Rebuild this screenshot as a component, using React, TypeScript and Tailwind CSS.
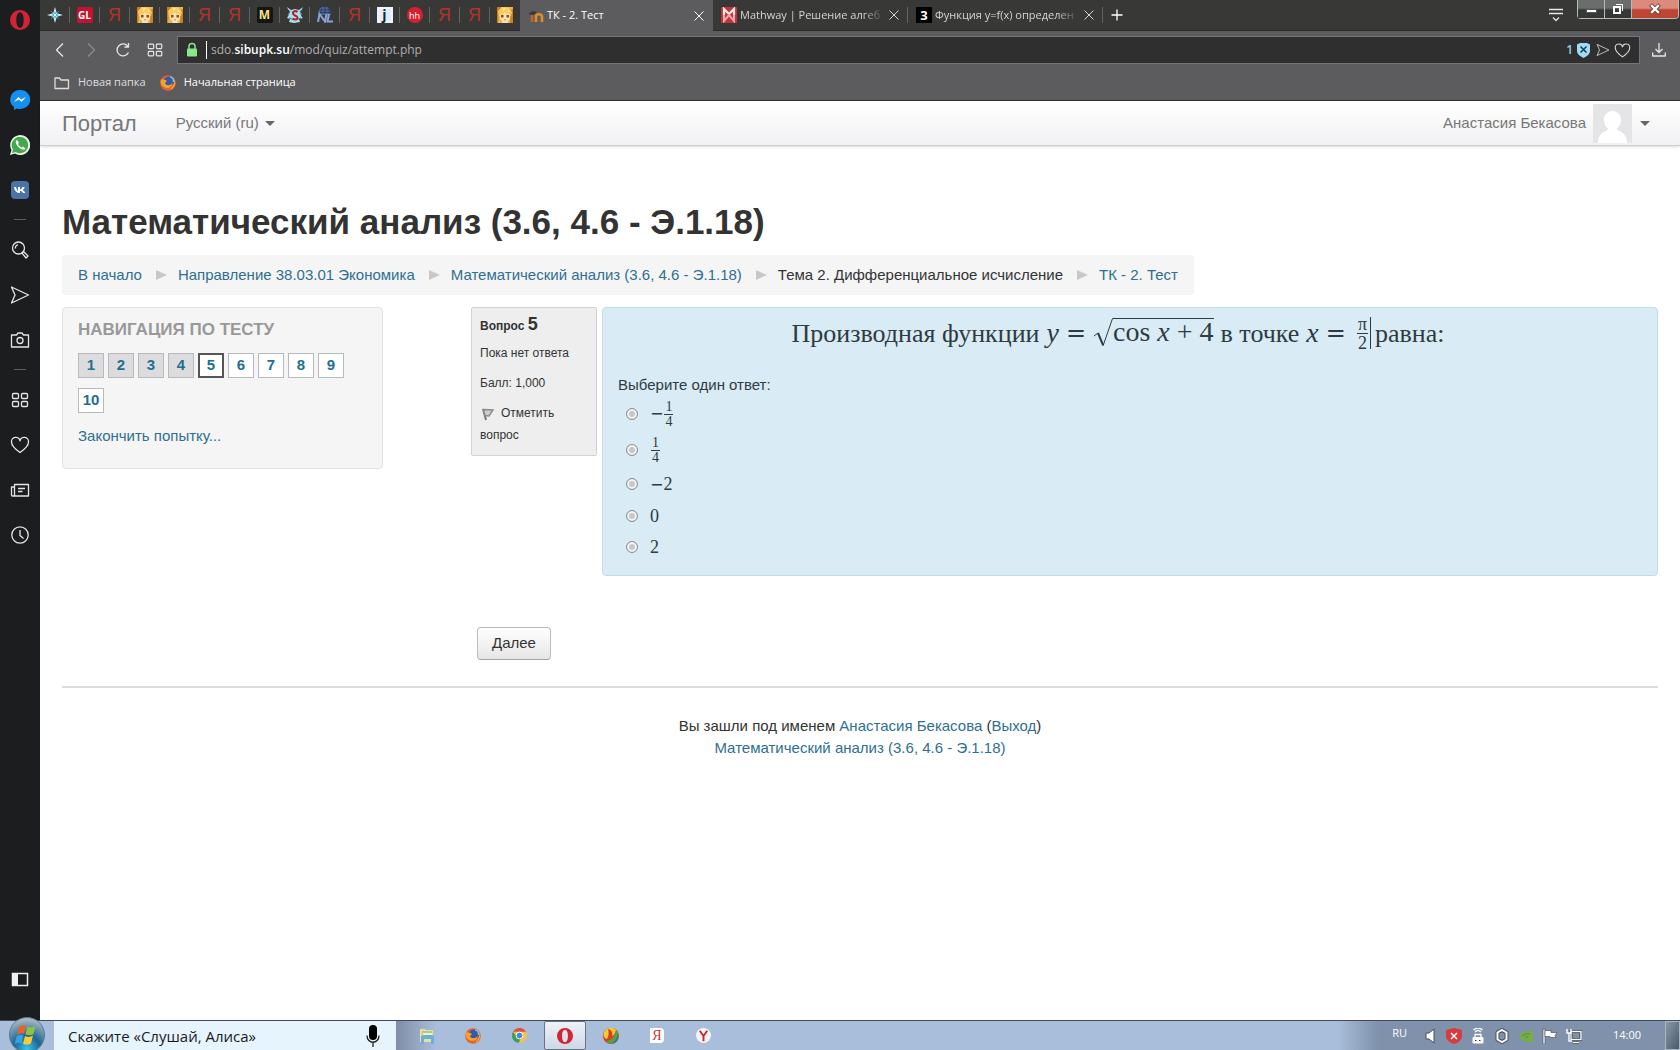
import type { ReactNode } from "react";

const link = "text-[#2f6f8f] hover:underline";

function GirlIcon() {
  return (
    <svg className="size-4" viewBox="0 0 16 16">
      <rect width="16" height="16" fill="#f0b045" />
      <path d="M0 0h4L2 6l-1 10H0zM14 3l2-1v14h-3z" fill="#c87f24" />
      <path d="M3 6 8 3l5 3v6l-3 3H6l-3-3z" fill="#fde0b4" />
      <path d="M1 4 5 0h6l4 5-1 4-3-3-1 2-2-3-3 3-1-1-2 4z" fill="#fbc95c" />
      <path d="m6 1 3 0-3 4zM10 1l3 4-2 0z" fill="#ffe9a0" />
      <path d="M4 8h2.500v2.500H4zM9.500 8H12v2.500H9.500z" fill="#8a4f1c" />
      <path d="M7 12.500h2v.8H7z" fill="#d0603c" />
      <path d="M5 15h6v1H5z" fill="#e8e0d0" />
    </svg>
  );
}

function YandexIcon() {
  return <span className="font-['Liberation_Sans',Arial,sans-serif] text-lg leading-4 text-[#b3332b]">Я</span>;
}

function StarIcon() {
  return (
    <svg className="size-4" viewBox="0 0 16 16">
      <path d="M8 0 9.800 6.200 16 8 9.800 9.800 8 16 6.200 9.800 0 8l6.200-1.800z" fill="#c9f1fc" />
      <path d="M4 4l2 2M12 4l-2 2M4 12l2-2M12 12l-2-2" stroke="#3e8ba8" />
      <path d="m8 4 1 3 3 1-3 1-1 3-1-3-3-1 3-1z" fill="#2a9cc4" />
      <circle cx="8" cy="8" r="1.200" fill="#e9fbff" />
    </svg>
  );
}

function SnakeIcon() {
  return (
    <svg className="size-4" viewBox="0 0 16 16">
      <path d="M0 0c1 3 2 3 3 4-1 2-1 4-3 7l3 1-1 3 5 1 6-1-1-3 4-1c-3-3-2-5-3-7 2-1 2-2 3-4l-4 3-4-1-4 1z" fill="#a8dfec" />
      <path d="M3 4 1 8M13 4l2 4M2 11l3 1M14 11l-3 1" stroke="#3a7f95" />
      <path d="M10.500 5C9 3.500 5.500 4 6 6.500s4.500 2 4.500 4.200-3.500 2.300-5 .8" fill="none" stroke="#b51f31" strokeWidth="2" />
    </svg>
  );
}

function GlobeNlIcon() {
  return (
    <svg className="size-4" viewBox="0 0 16 16">
      <path d="M2 8a6 6 0 0 1 11-5l1 5z" fill="#4f679c" />
      <path d="M2 5.500h12M8 0v8M3 3h10M5 1.500c-1.500 2-1.500 4-1 6M11 1.500c1.500 2 1.500 4 1 6" fill="none" stroke="#26304c" strokeWidth=".7" />
      <path d="m1 15 1.500-8L8 14.500 9.500 7M12 7l-1.500 7.500H16" fill="none" stroke="#8ba2dc" strokeWidth="2" />
    </svg>
  );
}

function MoodleIcon() {
  return (
    <svg className="size-4" viewBox="0 0 16 16">
      <path d="M4 14V7" stroke="#bb6a26" strokeWidth="2.500" />
      <path d="M8 14V8.500c0-3 6-3 6 0V14" fill="none" stroke="#e38a2e" strokeWidth="2.600" />
      <path d="m0 6 5-3 4 1-4 3z" fill="#3c3632" />
    </svg>
  );
}

function MathwayIcon() {
  return (
    <svg className="size-4" viewBox="0 0 16 16">
      <rect width="16" height="16" rx="1" fill="#c1353a" />
      <path d="M3 8V2l5 5 5-5v6" fill="none" stroke="#f8e6e6" strokeWidth="2.200" />
      <path d="M3 8v6l5-6 5 6V8" fill="none" stroke="#eba9aa" strokeWidth="2" />
    </svg>
  );
}

function Badge({ className, children }: { className: string; children: ReactNode }) {
  return <span className={`flex size-4 items-center justify-center font-bold leading-none ${className}`}>{children}</span>;
}

const pinned = [
  { name: "Звезда", icon: <StarIcon /> },
  { name: "GL", icon: <Badge className="rounded-xs bg-[#c2142e] text-[10px] text-white">GL</Badge> },
  { name: "Яндекс", icon: <YandexIcon /> },
  { name: "Аниме", icon: <GirlIcon /> },
  { name: "Аниме", icon: <GirlIcon /> },
  { name: "Яндекс", icon: <YandexIcon /> },
  { name: "Яндекс", icon: <YandexIcon /> },
  { name: "M", icon: <Badge className="rounded-xs bg-[#15150d] text-[12px] text-[#f2e48c]">M</Badge> },
  { name: "S", icon: <SnakeIcon /> },
  { name: "NL", icon: <GlobeNlIcon /> },
  { name: "Яндекс", icon: <YandexIcon /> },
  { name: "j", icon: <Badge className="border-2 border-[#eef4ff] bg-[#e4edfb] text-[14px] text-[#16243e]">j</Badge> },
  { name: "hh", icon: <Badge className="rounded-full bg-[#d6202e] text-[9px] font-normal text-white">hh</Badge> },
  { name: "Яндекс", icon: <YandexIcon /> },
  { name: "Яндекс", icon: <YandexIcon /> },
  { name: "Аниме", icon: <GirlIcon /> },
];

function CloseIcon() {
  return (
    <svg className="size-[10px]" viewBox="0 0 10 10" stroke="currentColor">
      <path d="m.5.5 9 9M9.500.5l-9 9" />
    </svg>
  );
}

function Tab({ icon, title, active }: { icon: ReactNode; title: string; active?: boolean }) {
  return (
    <div
      className={
        active
          ? "flex h-[31px] w-[193px] items-center bg-[#5c5c5e] px-2 text-white"
          : "flex h-[30px] w-[195px] items-center px-2 text-[#d5d5d5]"
      }
    >
      <span className="mr-[3px] shrink-0">{icon}</span>
      <span className={`min-w-0 flex-1 text-[11px] whitespace-nowrap ${active ? "" : "mask-r-from-85%"}`}>{title}</span>
      <button type="button" aria-label="Закрыть вкладку" className="ml-1 p-px">
        <CloseIcon />
      </button>
    </div>
  );
}

function Stroke({ children, className = "size-5", view = "0 0 20 20" }: { children: ReactNode; className?: string; view?: string }) {
  return (
    <svg className={className} viewBox={view} fill="none" stroke="currentColor" strokeWidth="1.300" strokeLinejoin="round">
      {children}
    </svg>
  );
}

function GridIcon({ className }: { className?: string }) {
  return (
    <Stroke className={className}>
      <rect x="2.500" y="3.500" width="6" height="5" rx="1" />
      <rect x="11.500" y="3.500" width="6" height="5" rx="1" />
      <rect x="2.500" y="11.500" width="6" height="5" rx="1" />
      <rect x="11.500" y="11.500" width="6" height="5" rx="1" />
    </Stroke>
  );
}

function HeartIcon({ className }: { className?: string }) {
  return (
    <Stroke className={className}>
      <path d="M10 17.500C5 14 1.500 10.500 1.500 7a4.300 4.300 0 0 1 8.500-1.200A4.300 4.300 0 0 1 18.500 7c0 3.500-3.500 7-8.500 10.500z" />
    </Stroke>
  );
}

function SendIcon({ className }: { className?: string }) {
  return (
    <Stroke className={className}>
      <path d="m1.500 2 17 8-17 8L5 10z" />
    </Stroke>
  );
}

function OperaIcon({ className }: { className?: string }) {
  return (
    <svg className={className} viewBox="0 0 20 20">
      <path fillRule="evenodd" d="M10 0a10 10 0 1 1 0 20 10 10 0 0 1 0-20zm0 2.200C7.500 2.200 6.300 6 6.300 10s1.200 7.800 3.700 7.800 3.700-3.800 3.700-7.800S12.500 2.200 10 2.200z" fill="#d52336" />
    </svg>
  );
}

const sidebar: { name: string; icon: ReactNode }[][] = [
  [
    {
      name: "Messenger",
      icon: (
        <svg className="size-5" viewBox="0 0 20 20">
          <path d="M10 0a10 9.500 0 1 1-3 18.500L4 20v-3A9.500 9.500 0 0 1 10 0z" fill="#1590ef" />
          <path d="m4 12 4.500-5 2.500 2.500L16 7l-4.500 5L9 9.500z" fill="#fff" />
        </svg>
      ),
    },
    {
      name: "WhatsApp",
      icon: (
        <svg className="size-5" viewBox="0 0 20 20">
          <path d="m0 20 1.500-5A10 10 0 1 1 5 18.600z" fill="#e8f5e6" />
          <path d="m2 18 1-3.500A8.200 8.200 0 1 1 5.500 17z" fill="#43a94c" />
          <path d="M7 5c-2 1-1.500 4 1.500 7s6 3.500 7 1.500l-2.500-2-1.500 1C10 12 8 10 8 8.800L9 7.500z" fill="#fff" />
        </svg>
      ),
    },
    {
      name: "ВКонтакте",
      icon: (
        <svg className="size-[18px]" viewBox="0 0 18 18">
          <rect width="18" height="18" rx="4" fill="#4b74a5" />
          <path d="M3 6h2c.5 2 1.200 3.500 2 4V6h2v2.500C10.500 8 11 7 11.500 6h2.300c-.5 1.300-1.300 2.200-2 2.900 1 .8 1.900 1.800 2.500 3.100H12c-.7-1.200-1.500-2-3-2.200V12C5.500 12 3.500 10 3 6z" fill="#fff" />
        </svg>
      ),
    },
  ],
  [
    {
      name: "Поиск",
      icon: (
        <Stroke>
          <circle cx="8.500" cy="8" r="6" />
          <path d="M5.500 8.500a3 3 0 0 1 2.500-3.700M12 13l1.500-1.500 4.500 4.500-2 2z" />
        </Stroke>
      ),
    },
    { name: "Поток", icon: <SendIcon className="size-5" /> },
    {
      name: "Снимок",
      icon: (
        <Stroke>
          <path d="M1.500 5h5l1.500-2h4l1.500 2h5v12h-17z" />
          <circle cx="10" cy="10.500" r="3" />
        </Stroke>
      ),
    },
  ],
  [
    { name: "Экспресс-панель", icon: <GridIcon className="size-5" /> },
    { name: "Закладки", icon: <HeartIcon className="size-5" /> },
    {
      name: "Новости",
      icon: (
        <Stroke>
          <path d="M4.500 4.500h14v11.500h-16a1 1 0 0 1-1-1V7h3zM4.500 7v9M8 8.500h7M8 11.500h4.500" />
        </Stroke>
      ),
    },
    {
      name: "История",
      icon: (
        <Stroke>
          <circle cx="10" cy="10" r="8.200" />
          <path d="M10 5v5.500l3.500 3" />
        </Stroke>
      ),
    },
  ],
];

function Sidebar() {
  return (
    <aside className="flex w-10 shrink-0 flex-col items-center bg-[#1b1d1e] pt-[10px] pb-8 text-[#e6e6e6]">
      <OperaIcon className="mb-[47px] size-5" />
      {sidebar.map((group, i) => (
        <div key={i} className="flex flex-col items-center">
          {i > 0 && <hr className="my-[7px] w-3 border-[#5b5d5e]" />}
          {group.map((item) => (
            <button key={item.name} type="button" aria-label={item.name} className="flex h-[45px] w-10 items-center justify-center">
              {item.icon}
            </button>
          ))}
        </div>
      ))}
      <button type="button" aria-label="Боковая панель" className="mt-auto">
        <svg className="size-[18px]" viewBox="0 0 18 18">
          <path d="M1.500 3.500h15v12h-15z" fill="none" stroke="#f0f0f0" strokeWidth="1.500" />
          <path d="M1 3h6v13H1z" fill="#f0f0f0" />
        </svg>
      </button>
    </aside>
  );
}

function TabStrip() {
  return (
    <div className="flex h-[31px] items-start border-b border-[#2a2b2a] bg-[#383936]">
      <nav aria-label="Закреплённые вкладки" className="flex">
        {pinned.map((tab, i) => (
          <button key={i} type="button" aria-label={tab.name} className="flex h-[30px] w-[30px] items-center justify-center">
            <span className="flex h-4 flex-1 items-center justify-center">{tab.icon}</span>
            {i < pinned.length - 1 && <span className="h-4 w-px bg-[#62635f]" />}
          </button>
        ))}
      </nav>
      <Tab active icon={<MoodleIcon />} title="ТК - 2. Тест" />
      <Tab icon={<MathwayIcon />} title="Mathway | Решение алгеб" />
      <span className="mt-[7px] -ml-px h-4 w-px bg-[#62635f]" />
      <Tab icon={<Badge className="bg-black text-[13px] text-white">3</Badge>} title="Функция y=f(x) определен" />
      <span className="mt-[7px] -ml-px h-4 w-px bg-[#62635f]" />
      <button type="button" aria-label="Новая вкладка" className="mt-2 ml-[7px] text-white">
        <Stroke className="size-[14px]" view="0 0 14 14">
          <path d="M7 1.500v11M1.500 7h11" />
        </Stroke>
      </button>
      <button type="button" aria-label="Меню вкладок" className="mt-[7px] ml-auto text-[#e8e8e8]">
        <Stroke className="h-4 w-[14px]" view="0 0 14 16">
          <path d="M0 2.500h14M0 6.500h14M4 10.500l3 3 3-3" />
        </Stroke>
      </button>
      <div className="mr-px ml-[14px] flex h-[19px] rounded-b border border-t-0 border-[#b9b9b9] bg-[#4a4c4b]">
        <button type="button" aria-label="Свернуть" className="flex w-[27px] items-end justify-center border-r border-[#b9b9b9] bg-linear-to-b from-[#6b6d6c] from-45% to-[#343837] to-55% pb-[5px]">
          <span className="h-[4px] w-[11px] border border-[#555] bg-white" />
        </button>
        <button type="button" aria-label="Развернуть" className="flex w-[27px] items-center justify-center border-r border-[#b9b9b9] bg-linear-to-b from-[#6b6d6c] from-45% to-[#343837] to-55%">
          <svg className="size-3" viewBox="0 0 12 12" fill="none" stroke="#fff">
            <path d="M4 1.500h6.500V8" />
            <path d="M2 4h6v6H2z" strokeWidth="2" />
          </svg>
        </button>
        <button type="button" aria-label="Закрыть" className="flex w-[46px] items-center justify-center rounded-br bg-linear-to-b from-[#dc8a7c] from-45% to-[#bd4531] to-55%">
          <svg className="size-3" viewBox="0 0 12 12" strokeLinecap="square">
            <path d="m3 3 6 6M9 3 3 9" stroke="#6a3a34" strokeWidth="4" />
            <path d="m3 3 6 6M9 3 3 9" stroke="#fff" strokeWidth="2.400" />
          </svg>
        </button>
      </div>
    </div>
  );
}

function AddressRow() {
  return (
    <div className="flex items-center pt-[5px] pr-[14px] text-[#e6e6e6]">
      <div className="flex w-[137px] items-center pl-3">
        <button type="button" aria-label="Назад">
          <Stroke className="h-4 w-4" view="0 0 16 16">
            <path d="M11 1.500 4.500 8l6.500 6.500" />
          </Stroke>
        </button>
        <button type="button" aria-label="Вперёд" className="ml-[15px] text-[#8b8b8d]">
          <Stroke className="h-4 w-4" view="0 0 16 16">
            <path d="m5 1.500 6.500 6.500L5 14.500" />
          </Stroke>
        </button>
        <button type="button" aria-label="Обновить" className="ml-4">
          <Stroke className="h-4 w-4" view="0 0 16 16">
            <path d="M13.500 10.500A6 6 0 1 1 13 4.500M13.500 1v4h-4" />
          </Stroke>
        </button>
        <button type="button" aria-label="Экспресс-панель" className="ml-[15px]">
          <GridIcon className="size-[18px]" />
        </button>
      </div>
      <div className="flex h-7 flex-1 items-center border border-[#757577] bg-[#2f2f30] pr-2 pl-2">
        <svg className="h-4 w-3" viewBox="0 0 12 16">
          <path d="M3 7V4.500a3 3 0 0 1 6 0V7" fill="none" stroke="#8be58b" strokeWidth="1.500" />
          <rect x="1" y="6.500" width="10" height="8" rx="1" fill="#8be58b" />
        </svg>
        <span className="mr-1 ml-2 h-[18px] w-px bg-white" />
        <label htmlFor="url" className="text-xs text-[#b0b0b0]">
          sdo.<span className="font-semibold text-white">sibupk.su</span>
        </label>
        <input id="url" defaultValue="/mod/quiz/attempt.php" className="min-w-0 flex-1 bg-transparent text-xs text-[#b0b0b0] outline-none" />
        <span className="mr-1 text-xs font-semibold text-[#8ed3ee]">1</span>
        <svg className="h-4 w-[13px]" viewBox="0 0 13 16">
          <path d="M0 2.500 3 1h7l3 1.500V9c0 3-3 5-6.500 7C3 14 0 12 0 9z" fill="#9fdcf5" />
          <path d="m3.500 4.500 6 6M9.500 4.500l-6 6" stroke="#1e3b4c" strokeWidth="1.500" />
        </svg>
        <button type="button" aria-label="Отправить" className="ml-[6px] text-[#c8c8c8]">
          <SendIcon className="size-[14px]" />
        </button>
        <button type="button" aria-label="В закладки" className="ml-[4px] text-[#d8d8d8]">
          <HeartIcon className="size-[17px]" />
        </button>
      </div>
      <button type="button" aria-label="Загрузки" className="ml-[12px]">
        <Stroke className="size-[14px]" view="0 0 14 14">
          <path d="M7 0v9M3.500 6 7 9.500 10.500 6M.7 9.500v3.500h12.600V9.500" />
        </Stroke>
      </button>
    </div>
  );
}

function BookmarksBar() {
  return (
    <div className="flex h-[37px] items-center border-b border-[#333] pt-px pl-[14px] text-[11px] text-white">
      <a href="#folder" className="flex items-center text-[#dedede]">
        <Stroke className="mr-2 h-[14px] w-4" view="0 0 16 14">
          <path d="M1 2h4.500L7 4h7.500v8.500H1z" />
        </Stroke>
        Новая папка
      </a>
      <a href="#start" className="ml-[14px] flex items-center">
        <FirefoxIcon className="mr-2 size-4" />
        Начальная страница
      </a>
    </div>
  );
}

function FirefoxIcon({ className }: { className?: string }) {
  return (
    <svg className={className} viewBox="0 0 16 16">
      <circle cx="8" cy="8" r="7.800" fill="#e4632a" />
      <circle cx="9" cy="6.500" r="5" fill="#315aa8" />
      <path d="M10 2c2 0 4 2 3.500 5" stroke="#7fc4ea" strokeWidth="1.500" fill="none" />
      <path d="M1 4c2 1 4 0 6 2l-2 2c1 3 5 3 8 0-1 5-6 6-9 4S0 8 1 4z" fill="#f6a12b" />
      <path d="M14 4c2 5 0 9-4 11 3-3 5-6 4-11z" fill="#ffc93a" />
    </svg>
  );
}

function Caret() {
  return <span className="inline-block border-x-[5px] border-t-[5px] border-x-transparent border-t-[#666]" />;
}

function Navbar() {
  return (
    <header className="flex h-[45px] items-center border-b border-[#cfcfd2] bg-linear-to-b from-white to-[#f1f1f4] px-[22px] text-[#777] shadow-sm">
      <a href="#portal" className="text-[22px]">
        Портал
      </a>
      <button type="button" className="ml-[39px] flex items-center gap-[6px]">
        Русский (ru)
        <Caret />
      </button>
      <button type="button" aria-label="Анастасия Бекасова" className="ml-auto flex items-center pr-[8px]">
        Анастасия Бекасова
        <svg className="ml-[7px] size-[39px]" viewBox="0 0 39 39">
          <rect width="39" height="39" fill="#e5e5e7" />
          <path d="M19.500 7c5 0 8.500 3.500 8.500 9 0 4-2 7-4 8.500l1 2c5 1.500 9 5 9 12.500H5c0-7 4-11 9-12.500l1-2C13 23 11 20 11 16c0-5.500 3.500-9 8.500-9z" fill="#fff" />
        </svg>
        <span className="ml-[8px] flex">
          <Caret />
        </span>
      </button>
    </header>
  );
}

const crumbs = [
  { text: "В начало", href: "#home" },
  { text: "Направление 38.03.01 Экономика", href: "#category" },
  { text: "Математический анализ (3.6, 4.6 - Э.1.18)", href: "#course" },
  { text: "Тема 2. Дифференциальное исчисление" },
  { text: "ТК - 2. Тест", href: "#quiz" },
];

function Breadcrumbs() {
  return (
    <nav aria-label="Навигация" className="w-fit rounded bg-[#f5f5f6] px-4 py-2">
      <ul className="flex items-center leading-6">
        {crumbs.map((crumb, i) => (
          <li key={crumb.text} className="flex items-center">
            {i > 0 && <span className="mr-[11px] ml-[14px] border-y-[5px] border-l-[11px] border-y-transparent border-l-[#c8c8c8]" />}
            {crumb.href ? (
              <a href={crumb.href} className={link}>
                {crumb.text}
              </a>
            ) : (
              <span>{crumb.text}</span>
            )}
          </li>
        ))}
      </ul>
    </nav>
  );
}

function buttonClass(n: number) {
  if (n < 5) return "border border-[#b9b9bb] bg-[#dcdcde]";
  if (n === 5) return "border-2 border-[#555] bg-white";
  return "border border-[#b9b9bb] bg-white";
}

function QuizNavigation() {
  return (
    <section className="min-h-[162px] w-[321px] shrink-0 rounded border border-[#e2e2e4] bg-[#f5f5f6] px-[15px] pt-[11px]">
      <h2 className="text-[17px] leading-[22px] font-bold text-[#999] uppercase">Навигация по тесту</h2>
      <div className="mt-[12px] flex flex-wrap gap-x-1 gap-y-[10px]">
        {[1, 2, 3, 4, 5, 6, 7, 8, 9, 10].map((n) => (
          <a
            key={n}
            href={`#q${n}`}
            className={`flex h-[25px] w-[26px] items-center justify-center font-bold text-[#216f90] ${buttonClass(n)}`}
          >
            {n}
          </a>
        ))}
      </div>
      <a href="#finish" className={`mt-3 inline-block leading-[22px] ${link}`}>
        Закончить попытку...
      </a>
    </section>
  );
}

function Fraction({ top, bottom }: { top: string; bottom: string }) {
  return (
    <span className="inline-flex flex-col items-center text-center leading-none">
      <span className="border-b border-current px-px">{top}</span>
      <span>{bottom}</span>
    </span>
  );
}

function QuestionInfo() {
  return (
    <div className="w-[126px] shrink-0 self-start rounded-xs border border-[#d3d3d5] bg-[#eeeeef] px-2 pt-[5px] pb-[9px] text-xs leading-[22px]">
      <h3 className="font-bold">
        Вопрос <span className="text-lg leading-[22px]">5</span>
      </h3>
      <p className="mt-[5px]">Пока нет ответа</p>
      <p className="mt-2">Балл: 1,000</p>
      <button type="button" className="mt-2 block text-left">
        <svg className="mr-[5px] inline size-4" viewBox="0 0 16 16">
          <path d="m3 3 3 11" stroke="#777" strokeWidth="2" />
          <path d="M3.500 3.500 13 4l-4 6-4-.5z" fill="#cfcfd0" stroke="#8c8c8e" strokeWidth="1.500" />
        </svg>
        Отметить вопрос
      </button>
    </div>
  );
}

function Minus() {
  return <span className="font-['DejaVu_Sans',sans-serif] text-base">−</span>;
}

const answers: { id: string; row: string; label: ReactNode }[] = [
  {
    id: "a",
    row: "h-9",
    label: (
      <span className="flex items-center gap-px text-sm">
        <Minus />
        <Fraction top="1" bottom="4" />
      </span>
    ),
  },
  { id: "b", row: "h-9", label: <span className="flex pl-px text-sm"><Fraction top="1" bottom="4" /></span> },
  { id: "c", row: "h-8", label: <span><Minus />2</span> },
  { id: "d", row: "h-[31px]", label: "0" },
  { id: "e", row: "h-[31px]", label: "2" },
];

function Question() {
  return (
    <div className="min-h-[269px] flex-1 rounded border border-[#bfdfe8] bg-[#d9ebf4] px-[15px] pt-[3px] text-[#2e3b42]">
      <p className="flex h-11 items-center justify-center gap-[7px] pr-6 font-['Liberation_Serif',serif] text-[26px] whitespace-nowrap">
        <span>Производная функции</span>
        <i className="text-[28px]">y</i>
        <span className="font-['DejaVu_Sans',sans-serif] text-2xl">=</span>
        <span className="flex items-end text-[28px]">
          <svg className="h-[30px] w-5" viewBox="0 0 20 30" fill="none" stroke="currentColor">
            <path d="m1 18 4-3" />
            <path d="m5 15 5 12" strokeWidth="2" />
            <path d="M10 28 19.500.5h.5" />
          </svg>
          <span className="h-[30px] border-t border-current leading-[26px]">
            cos <i>x</i> + 4
          </span>
        </span>
        <span>в точке</span>
        <i className="text-[28px]">x</i>
        <span className="font-['DejaVu_Sans',sans-serif] text-2xl">=</span>
        <span className="ml-1 flex items-center">
          <span className="mr-1 flex h-8 items-center border-r border-current pr-[2px] text-lg">
            <Fraction top="π" bottom="2" />
          </span>
          <span>равна:</span>
        </span>
      </p>
      <fieldset className="mt-[19px]">
        <legend className="leading-[22px]">Выберите один ответ:</legend>
        <div className="pl-2">
          {answers.map((a) => (
            <div key={a.id} className={`flex items-center ${a.row}`}>
              <input
                type="radio"
                id={a.id}
                name="answer"
                className="size-3 appearance-none rounded-full border border-[#8b8f93] bg-[#c5c7ca] shadow-[inset_0_0_0_2px_#f5f5f5] checked:bg-[#333]"
              />
              <label htmlFor={a.id} className="pl-3 font-['Liberation_Serif',serif] text-lg leading-6">
                {a.label}
              </label>
            </div>
          ))}
        </div>
      </fieldset>
    </div>
  );
}

function StartOrb() {
  return (
    <svg className="size-9" viewBox="0 0 36 36">
      <defs>
        <radialGradient id="orb" cx="50%" cy="90%" r="85%">
          <stop offset="0" stopColor="#35c5ee" />
          <stop offset=".45" stopColor="#1a6597" />
          <stop offset="1" stopColor="#a9b8c3" />
        </radialGradient>
      </defs>
      <circle cx="18" cy="18" r="17.500" fill="url(#orb)" stroke="#5c7589" />
      <path d="M10 10c3-2 5-2 7-1l-2 8c-2-1-4-1-7 1z" fill="#e8632b" />
      <path d="M18.500 9.500c3 1.500 5 1.200 8-.5l-2 8c-3 1.500-5 1.500-8 .5z" fill="#8cc440" />
      <path d="M7.500 19.500c3-2 5-2 7-1l-2 8c-2-1-4-1-7 1z" fill="#3b9fe0" />
      <path d="M16 19c3 1.500 5 1.200 8-.5l-2 8c-3 1.500-5 1.500-8 .5z" fill="#fbcb35" />
    </svg>
  );
}

const apps = [
  {
    name: "Проводник",
    icon: (
      <svg className="size-4" viewBox="0 0 16 16">
        <path d="M1 1h5l1 1h7v12H1z" fill="#f0dd91" />
        <path d="M3 3h10v4H3z" fill="#9fcf8d" />
        <path d="M4 5h9v2H4z" fill="#f8efc4" />
        <path d="M2 9c0-1 1-2 2-2h9c1 0 2 1 2 2v7h-3v-5H5v5H2z" fill="#66b2df" />
      </svg>
    ),
  },
  { name: "Firefox", icon: <FirefoxIcon className="size-4" /> },
  {
    name: "Chrome",
    icon: (
      <svg className="size-[15px]" viewBox="0 0 16 16">
        <circle cx="8" cy="8" r="8" fill="#f3c343" />
        <path d="M1 4a8 8 0 0 1 14 0H8z" fill="#dc5145" />
        <path d="M1 4a8 8 0 0 0 6 12l3-6-5-1z" fill="#3f9f5c" />
        <circle cx="8" cy="8" r="3.600" fill="#4c86d8" stroke="#fff" />
      </svg>
    ),
  },
  { name: "Opera", icon: <OperaIcon className="size-4" />, active: true },
  {
    name: "Punto",
    icon: (
      <svg className="size-4" viewBox="0 0 16 16">
        <circle cx="8" cy="8" r="8" fill="#d83a2a" />
        <path d="M2 3C5-1 10-1 13 2 12 7 8 10 3 11 0 9 0 5 2 3z" fill="#f5cf2c" />
        <path d="M5 1c4 1 5 4 4 8L4 11c2-3 2-7 1-10z" fill="#d83a2a" />
        <path d="M13 2c4 4 4 10-2 13-3 1-6 1-8-2 6-1 9-5 10-11z" fill="#58a33c" />
        <path d="M15 6c1 5-2 9-6 10 3-3 5-6 6-10z" fill="#2b6fc0" />
      </svg>
    ),
  },
  {
    name: "Яндекс",
    icon: (
      <span className="flex h-[15px] w-[14px] items-center justify-center rounded-r bg-white font-['Liberation_Serif',serif] text-sm leading-none text-[#c43a34]">Я</span>
    ),
  },
  {
    name: "Яндекс.Браузер",
    icon: (
      <svg className="size-[15px]" viewBox="0 0 16 16">
        <circle cx="8" cy="8" r="8" fill="#f7f4f5" />
        <path d="m4 3 4 5.500L12 3M8 8v6" fill="none" stroke="#c2272f" strokeWidth="2" />
      </svg>
    ),
  },
];

function Tray() {
  return (
    <div className="flex items-center self-stretch bg-linear-to-r from-[#a9bedb] to-[#7f91ab] to-[40px] pl-[54px] text-[11px] text-white">
      <span className="pb-1">RU</span>
      <div className="ml-[15px] flex items-center gap-[8px]">
        <svg className="size-4" viewBox="0 0 16 16">
          <path d="M4 5h3l5-4v14L7 11H4z" fill="#fff" stroke="#454f60" />
        </svg>
        <svg className="size-4" viewBox="0 0 16 16">
          <path d="m8 0 8 2v6c0 4-4 7-8 8-4-1-8-4-8-8V2z" fill="#d63c3c" />
          <path d="m5 5 6 6M11 5l-6 6" stroke="#fff" strokeWidth="1.500" />
        </svg>
        <svg className="size-4" viewBox="0 0 16 16" fill="none" stroke="#fff">
          <path d="M3 9.500h10v5.500H3z" fill="#fff" />
          <path d="M5 9V6.500h6V9M5 4c2-2 4-2 6 0M3.500 2c3-2.500 6-2.500 9 0" strokeWidth="1.300" />
          <path d="M5 12.500h1.500M9 12.500h1.500" stroke="#333" />
        </svg>
        <svg className="size-4" viewBox="0 0 16 16" fill="none">
          <path d="m8 2 4.500 2.500v7L8 14l-4.500-2.500v-7z" stroke="#444e5e" strokeWidth="4" strokeLinejoin="round" />
          <path d="m8 2 4.500 2.500v7L8 14l-4.500-2.500v-7z" stroke="#fff" strokeWidth="2" />
        </svg>
        <svg className="size-4" viewBox="0 0 16 16">
          <path d="M1 8c3-4 7-5 14-5v11H9C5 13 2 11 1 8z" fill="#76ad45" />
          <path d="M4 8c2-2 5-3 8-2M7 9h3" stroke="#5c8b39" fill="none" />
        </svg>
        <svg className="size-4" viewBox="0 0 16 16">
          <path d="M1 1h2v15H1z" fill="#fff" stroke="#394352" strokeWidth=".6" />
          <path d="M3 2.500h6v2h6l-2 3 1 2H8v-1H3z" fill="#fff" stroke="#394352" strokeWidth=".6" />
        </svg>
        <svg className="size-4" viewBox="0 0 16 16" fill="none">
          <path d="M5 3.500h10v8H5zM7 14.500h6" stroke="#333d4b" strokeWidth="3" />
          <path d="M5 3.500h10v8H5zM7 14.500h6" stroke="#fff" strokeWidth="1.400" />
          <path d="M1 1v4h4V1M3 5v8h3" stroke="#fff" strokeWidth="1.400" />
        </svg>
      </div>
      <time className="mr-6 ml-[31px]">14:00</time>
      <button type="button" aria-label="Показать рабочий стол" className="w-[15px] self-stretch border border-[#a9b6c5] bg-linear-to-br from-[#8b98a8] to-[#4a5a6c]" />
    </div>
  );
}

function Taskbar() {
  return (
    <footer className="flex h-[30px] items-center border-t border-[#41495c] bg-[#a9bedb] font-['Open_Sans','Noto_Sans',sans-serif]">
      <button type="button" aria-label="Пуск" className="relative -top-[4px] flex h-[30px] w-[54px] shrink-0 items-start justify-center self-start bg-transparent">
        <StartOrb />
      </button>
      <div className="flex w-[342px] items-center self-stretch bg-[#e6f4fe] pr-4 pl-[14px]">
        <input aria-label="Поиск" placeholder="Скажите «Слушай, Алиса»" className="min-w-0 flex-1 bg-transparent text-[15px] leading-5 outline-none placeholder:text-[#1a1a1a]" />
        <svg className="h-[22px] w-[14px]" viewBox="0 0 14 22">
          <rect x="3" y="0" width="8" height="15" rx="4" fill="#000" />
          <path d="M1 10.500c0 9 12 9 12 0M7 17v5" fill="none" stroke="#222" strokeWidth="1.300" />
        </svg>
      </div>
      <nav aria-label="Программы" className="flex flex-1 items-center gap-1 self-stretch bg-linear-to-r from-[#7f8da6] to-[#a9bedb] to-[40px] pl-[10px]">
        {apps.map((app) => (
          <button
            key={app.name}
            type="button"
            aria-label={app.name}
            className={`flex h-[29px] w-[42px] items-center justify-center ${app.active ? "rounded-xs border border-[#66748a] bg-linear-to-b from-[#eef2f7] to-[#cdd8e6]" : ""}`}
          >
            {app.icon}
          </button>
        ))}
      </nav>
      <Tray />
    </footer>
  );
}

export default function App() {
  return (
    <div className="flex min-h-screen flex-col overflow-hidden bg-white">
      <div className="flex flex-1">
        <Sidebar />
        <div className="flex min-w-0 flex-1 flex-col">
          <div className="bg-[#5c5c5e] font-['Open_Sans','Noto_Sans',sans-serif]">
            <TabStrip />
            <AddressRow />
            <BookmarksBar />
          </div>
          <div className="flex-1 font-['Liberation_Sans',Arial,sans-serif] text-[15px] text-[#333]">
            <Navbar />
            <main className="px-[22px] pt-[54px]">
              <h1 className="text-[35px] leading-[44px] font-bold">Математический анализ (3.6, 4.6 - Э.1.18)</h1>
              <div className="mt-[11px]">
                <Breadcrumbs />
              </div>
              <div className="mt-3 flex items-start">
                <QuizNavigation />
                <form className="ml-[88px] flex-1" onSubmit={(e) => e.preventDefault()}>
                  <div className="flex gap-[5px]">
                    <QuestionInfo />
                    <Question />
                  </div>
                  <button
                    type="submit"
                    className="mt-[51px] ml-[6px] h-[33px] rounded border border-[#bbb] border-b-[#a2a2a2] bg-linear-to-b from-white to-[#e6e6e6] px-[14px]"
                  >
                    Далее
                  </button>
                </form>
              </div>
              <hr className="mt-[26px] border-t-2 border-[#dcdcdc]" />
              <div className="mt-[27px] text-center leading-[22px]">
                <p>
                  Вы зашли под именем <a href="#user" className={link}>Анастасия Бекасова</a> (
                  <a href="#logout" className={link}>Выход</a>)
                </p>
                <a href="#course" className={link}>Математический анализ (3.6, 4.6 - Э.1.18)</a>
              </div>
            </main>
          </div>
        </div>
      </div>
      <Taskbar />
    </div>
  );
}
